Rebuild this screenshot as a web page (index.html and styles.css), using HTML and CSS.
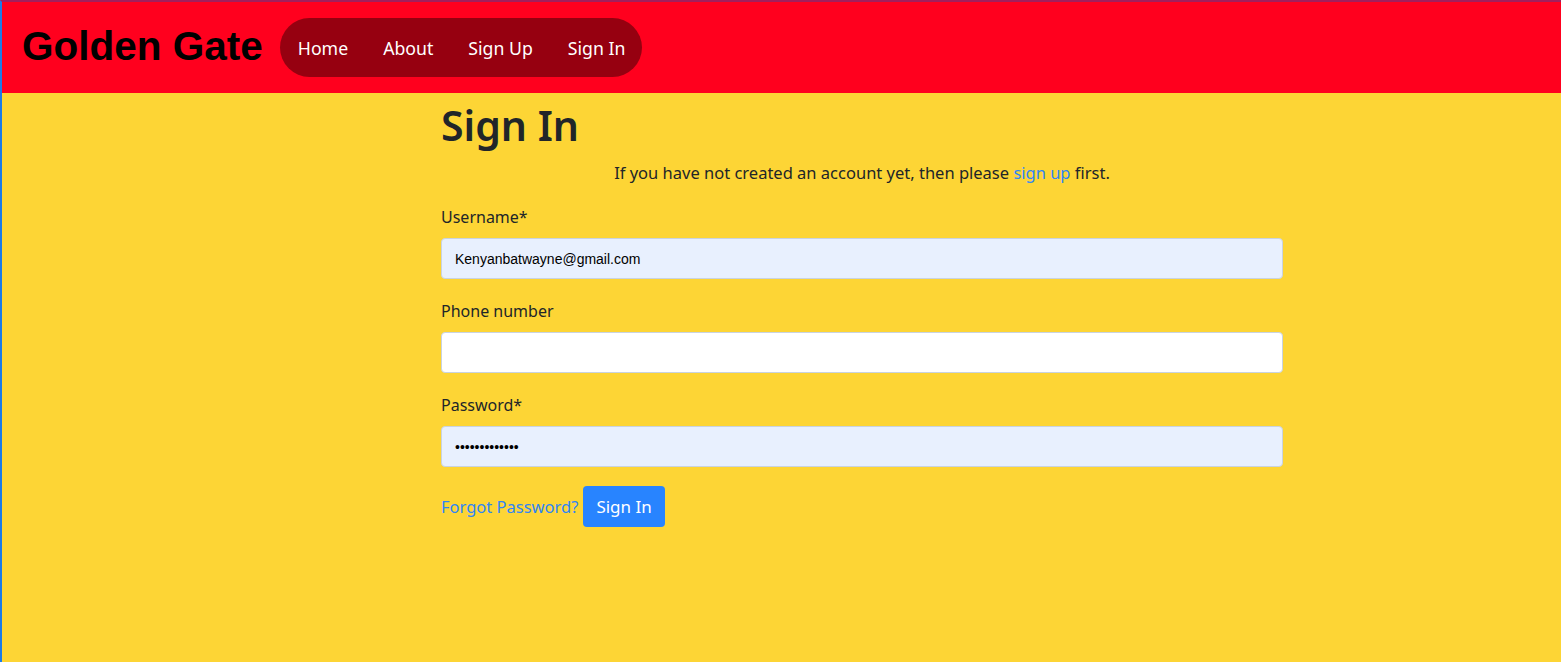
FILE: index.html
```html
<!DOCTYPE html>
<html lang="en">
<head>
<meta charset="utf-8">
<title>Sign In</title>
<link rel="stylesheet" href="styles.css">
</head>
<body>
<header class="topbar">
  <a class="brand" href="#">Golden Gate</a>
  <nav class="pill">
    <a href="#">Home</a>
    <a href="#">About</a>
    <a href="#">Sign Up</a>
    <a href="#">Sign In</a>
  </nav>
</header>
<main class="page">
  <section class="content">
    <h1 class="title">Sign In</h1>
    <p class="note">If you have not created an account yet, then please <a href="#">sign up</a> first.</p>
    <form class="form">
      <div class="field">
        <label>Username*</label>
        <input class="input autofill" type="text" value="Kenyanbatwayne@gmail.com">
      </div>
      <div class="field">
        <label>Phone number</label>
        <input class="input" type="text">
      </div>
      <div class="field">
        <label>Password*</label>
        <input class="input autofill" type="password" value="kenyanbatway1">
      </div>
      <div class="actions">
        <a class="forgot" href="#">Forgot Password?</a>
        <button class="btn" type="button">Sign In</button>
      </div>
    </form>
  </section>
</main>
</body>
</html>
```
FILE: styles.css
```css
* { box-sizing: border-box; }
html, body { height: 100%; }
body {
  margin: 0;
  background: #fdd535;
  border-top: 2px solid #a31f5c;
  border-left: 2px solid #1b7be8;
  font-family: "Noto Sans", "Open Sans", sans-serif;
  color: #212529;
  font-size: 16px;
}
.topbar {
  height: 91px;
  background: #ff001e;
  display: flex;
  align-items: center;
  padding-left: 20px;
}
.brand {
  font-family: "Liberation Sans", Arial, sans-serif;
  font-weight: bold;
  font-size: 40.5px;
  color: #000;
  text-decoration: none;
  margin-right: 17px;
  margin-top: -2px;
}
.pill {
  background: #960010;
  border-radius: 30px;
  height: 59px;
  display: flex;
  align-items: center;
  padding: 0 17px 0 18px;
  gap: 35px;
  margin-top: -1px;
}
.pill a {
  color: #fff;
  text-decoration: none;
  font-size: 17.7px;
  line-height: 24px;
  padding-top: 2px;
}
.page {
  padding-left: 439px;
}
.content {
  width: 842px;
}
.title {
  font-size: 41px;
  font-weight: 600;
  margin: 8px 0 0;
  line-height: 1.2;
}
.note {
  text-align: center;
  margin: 11px 0 0;
  font-size: 16.5px;
  line-height: 24px;
}
.note a, .forgot { color: #2f85f6; text-decoration: none; }
.form { margin-top: 20px; }
.field { margin-bottom: 20px; }
.field label {
  display: block;
  line-height: 24px;
  margin-bottom: 9px;
}
.input {
  display: block;
  width: 100%;
  height: 41px;
  border: 1px solid #c9d3e0;
  border-radius: 4px;
  background: #fff;
  padding: 0 13px;
  font-family: "Liberation Sans", Arial, sans-serif;
  font-size: 14px;
  color: #000;
}
.input.autofill { background: #e8f0fe; }
.actions {
  display: flex;
  align-items: center;
  gap: 5px;
  margin-top: -1px;
}
.forgot { font-size: 16.5px; }
.btn {
  background: #2884ff;
  border: none;
  border-radius: 4px;
  color: #fff;
  height: 41px;
  padding: 0 13px;
  font-family: "Noto Sans", "Open Sans", sans-serif;
  font-size: 17px;
}
```
